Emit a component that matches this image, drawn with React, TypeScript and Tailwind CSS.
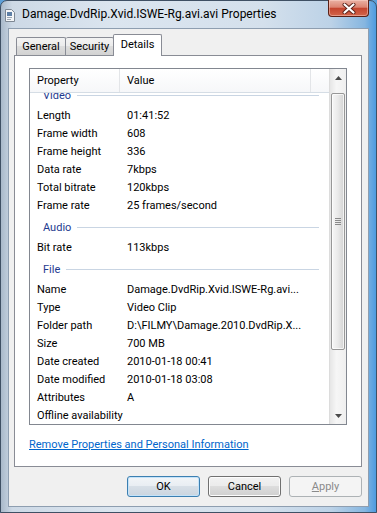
import React from "react";

type Row = { label: string; value: string };
type Group = { name: string; rows: Row[] };

const groups: Group[] = [
  {
    name: "Video",
    rows: [
      { label: "Length", value: "01:41:52" },
      { label: "Frame width", value: "608" },
      { label: "Frame height", value: "336" },
      { label: "Data rate", value: "7kbps" },
      { label: "Total bitrate", value: "120kbps" },
      { label: "Frame rate", value: "25 frames/second" },
    ],
  },
  {
    name: "Audio",
    rows: [{ label: "Bit rate", value: "113kbps" }],
  },
  {
    name: "File",
    rows: [
      { label: "Name", value: "Damage.DvdRip.Xvid.ISWE-Rg.avi..." },
      { label: "Type", value: "Video Clip" },
      { label: "Folder path", value: "D:\\FILMY\\Damage.2010.DvdRip.X..." },
      { label: "Size", value: "700 MB" },
      { label: "Date created", value: "2010-01-18 00:41" },
      { label: "Date modified", value: "2010-01-18 03:08" },
      { label: "Attributes", value: "A" },
      { label: "Offline availability", value: "" },
    ],
  },
];

const FileIcon = () => (
  <svg width="10" height="13" viewBox="0 0 10 13" className="mt-[8px] ml-[4px] shrink-0">
    <path d="M0.5 0.5h6l3 3v9h-9z" fill="#f4f6f8" stroke="#7d8793" />
    <rect x="2" y="3" width="5" height="4" fill="#5d7fa6" />
    <rect x="2" y="8" width="5" height="1" fill="#9aa6b3" />
    <rect x="2" y="10" width="4" height="1" fill="#9aa6b3" />
  </svg>
);

const CloseButton = () => (
  <div className="-mt-px mr-[7px] ml-auto flex h-[17px] w-[41px] items-center justify-center rounded-b-[4px] border border-t-0 border-[#5a2016] bg-[linear-gradient(to_bottom,#eab2a4_0%,#dc8472_45%,#c4452f_52%,#d2654b_100%)] shadow-[inset_0_0_0_1px_rgba(255,220,210,0.45)]">
    <svg width="14" height="11" viewBox="0 0 14 11">
      <path d="M2.5 1.5l9 8M11.5 1.5l-9 8" stroke="#5b2118" strokeWidth="4" strokeLinecap="round" />
      <path d="M2.5 1.5l9 8M11.5 1.5l-9 8" stroke="#ffffff" strokeWidth="2.2" strokeLinecap="round" />
    </svg>
  </div>
);

const Arrow = ({ up }: { up?: boolean }) => (
  <div className="flex h-[17px] items-center justify-center">
    <svg width="7" height="4" viewBox="0 0 7 4">
      <path d={up ? "M3.5 0L7 4H0z" : "M0 0h7L3.5 4z"} fill="#4a4a4a" />
    </svg>
  </div>
);

const ScrollBar = () => (
  <div className="flex w-[17px] shrink-0 flex-col border-l border-[#dcdcdc] bg-[linear-gradient(to_right,#e6e6e6,#f6f6f6_40%,#efefef)]">
    <Arrow up />
    <div className="mt-[7px] mx-px flex h-[257px] items-center justify-center rounded-[2px] border border-[#979797] bg-[linear-gradient(to_right,#f7f7f7,#e9e9e9_50%,#d3d3d3)] shadow-[inset_0_0_0_1px_rgba(255,255,255,0.7)]">
      <div className="flex flex-col gap-px">
        <div className="h-px w-[6px] bg-[#8a8a8a]" />
        <div className="h-px w-[6px] bg-[#8a8a8a]" />
        <div className="h-px w-[6px] bg-[#8a8a8a]" />
        <div className="h-px w-[6px] bg-[#8a8a8a]" />
      </div>
    </div>
    <div className="flex-1" />
    <Arrow />
  </div>
);

const PropertyList = () => (
  <div className="mx-[14px] mt-[12px] flex h-[357px] border border-[#828790] bg-white">
    <div className="flex min-w-0 flex-1 flex-col">
      {/* Column header */}
      <div className="flex h-[24px] shrink-0 items-center border-b border-[#d5dde5] bg-[linear-gradient(to_bottom,#ffffff,#f6f7f9)]">
        <div className="flex h-full w-[90px] items-center border-r border-[#e3e5e8] pl-[7px]">Property</div>
        <div className="flex h-full w-[191px] items-center border-r border-[#e3e5e8] pl-[7px]">Value</div>
      </div>
      {/* Rows, scrolled a little into the first group */}
      <div className="flex-1 overflow-hidden">
        <div className="-mt-[11px]">
          {groups.map((g) => (
            <div key={g.name}>
              <div className="flex h-[24px] items-center pt-[2px] pl-[13px] pr-[10px]">
                <span className="text-[#1e3a8f]">{g.name}</span>
                <div className="ml-[6px] h-px flex-1 bg-[#c9d5e3]" />
              </div>
              {g.rows.map((r) => (
                <div key={r.label} className="flex h-[18px] items-center whitespace-nowrap">
                  <div className="w-[90px] shrink-0 pl-[7px]">{r.label}</div>
                  <div className="pl-[7px]">{r.value}</div>
                </div>
              ))}
            </div>
          ))}
        </div>
      </div>
    </div>
    <ScrollBar />
  </div>
);

const Button = ({
  children,
  kind,
}: {
  children: React.ReactNode;
  kind?: "default" | "disabled";
}) => {
  const look =
    kind === "default"
      ? "border-[#3c7fb1] bg-[linear-gradient(to_bottom,#f2f5f8,#e8edf2_50%,#d7dfe7_50%,#cbd5df)] shadow-[inset_0_0_0_1px_#c4e3f9] text-black"
      : kind === "disabled"
      ? "border-[#adb2b5] bg-[#f4f4f4] text-[#8a8a8a]"
      : "border-[#707070] bg-[linear-gradient(to_bottom,#f2f2f2,#ebebeb_50%,#dddddd_50%,#cfcfcf)] shadow-[inset_0_0_0_1px_#fcfcfc] text-black";
  return (
    <div className={`flex h-[21px] w-[73px] items-center justify-center rounded-[3px] border ${look}`}>
      {children}
    </div>
  );
};

export default function App() {
  return (
    <div className="h-[513px] w-[377px] overflow-hidden bg-[#5d9fd8] font-['Roboto',sans-serif] text-[11px] leading-[15px] text-black">
      <div className="flex h-[513px] w-[377px] flex-col rounded-t-[7px] border border-[#3f5064] bg-[linear-gradient(to_right,#a9b9ca_0%,#cdd9e6_3%,#dbe5ef_30%,#d4e0ec_70%,#bcd2e7_88%,#86b6e0_97%,#4d9be0_100%)]">
        {/* Title bar */}
        <div className="flex h-[27px] shrink-0 items-start">
          <FileIcon />
          <div className="mt-[6px] ml-[7px] text-[12px] whitespace-nowrap">
            Damage.DvdRip.Xvid.ISWE-Rg.avi.avi Properties
          </div>
          <CloseButton />
        </div>

        {/* Client area */}
        <div className="mx-[7px] mb-[5px] flex flex-1 flex-col border border-[#8e9eb0] bg-[#f0f0f0]">
          {/* Tabs */}
          <div className="mt-[5px] flex h-[21px] shrink-0 items-end pl-[7px]">
            <div className="flex h-[18px] w-[50px] items-center justify-center rounded-t-[2px] border border-b-0 border-[#898c95] bg-[linear-gradient(to_bottom,#f3f3f3,#ebebeb_50%,#dddddd_50%,#d2d2d2)]">
              General
            </div>
            <div className="flex h-[18px] w-[48px] items-center justify-center rounded-t-[2px] border border-b-0 border-l-0 border-[#898c95] bg-[linear-gradient(to_bottom,#f3f3f3,#ebebeb_50%,#dddddd_50%,#d2d2d2)]">
              Security
            </div>
            <div className="relative z-10 -mb-px -ml-px flex h-[22px] w-[49px] items-start justify-center rounded-t-[2px] border border-b-0 border-[#898c95] bg-white pt-[2px]">
              Details
            </div>
          </div>

          {/* Tab page */}
          <div className="mr-[6px] ml-[5px] flex flex-1 flex-col border border-[#898c95] bg-white">
            <PropertyList />
            <div className="mt-[12px] ml-[14px]">
              <span className="text-[#0066cc] underline">Remove Properties and Personal Information</span>
            </div>
          </div>

          {/* Buttons */}
          <div className="my-[9px] flex shrink-0 justify-end gap-[8px] pr-[6px]">
            <Button kind="default">OK</Button>
            <Button>Cancel</Button>
            <Button kind="disabled">
              <span>
                <span className="underline">A</span>pply
              </span>
            </Button>
          </div>
        </div>
      </div>
    </div>
  );
}
